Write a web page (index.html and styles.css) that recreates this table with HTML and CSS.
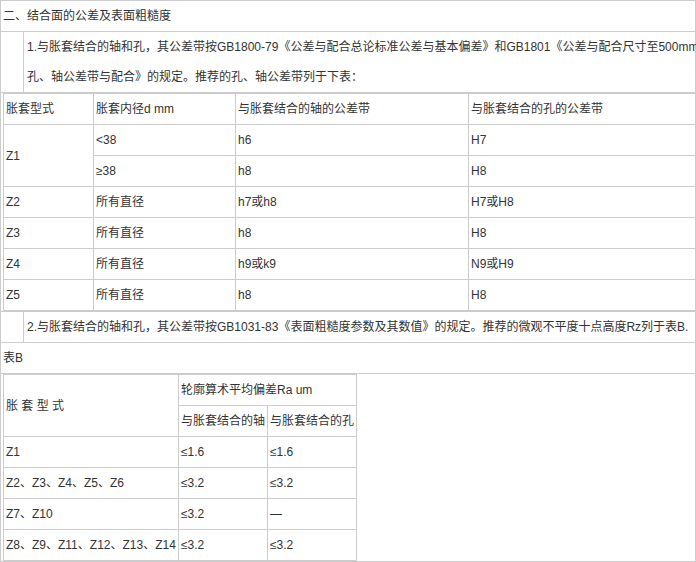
FILE: index.html
```html
<!DOCTYPE html>
<html lang="zh-CN">
<head>
<meta charset="utf-8">
<title>结合面的公差及表面粗糙度</title>
<link rel="stylesheet" href="styles.css">
</head>
<body>
<table class="outer">
  <colgroup><col class="c-indent"><col class="c-main"></colgroup>
  <tbody>
    <tr>
      <td colspan="2" class="title">二、结合面的公差及表面粗糙度</td>
    </tr>
    <tr>
      <td class="indent"></td>
      <td class="para">1.与胀套结合的轴和孔，其公差带按GB1800-79《公差与配合总论标准公差与基本偏差》和GB1801《公差与配合尺寸至500mm<br>孔、轴公差带与配合》的规定。推荐的孔、轴公差带列于下表：</td>
    </tr>
    <tr>
      <td colspan="2" class="holder">
        <table class="grid grid-a">
          <colgroup><col class="a1"><col class="a2"><col class="a3"><col class="a4"></colgroup>
          <tbody>
            <tr><td>胀套型式</td><td>胀套内径d mm</td><td>与胀套结合的轴的公差带</td><td>与胀套结合的孔的公差带</td></tr>
            <tr><td rowspan="2">Z1</td><td>&lt;38</td><td>h6</td><td>H7</td></tr>
            <tr><td>≥38</td><td>h8</td><td>H8</td></tr>
            <tr><td>Z2</td><td>所有直径</td><td>h7或h8</td><td>H7或H8</td></tr>
            <tr><td>Z3</td><td>所有直径</td><td>h8</td><td>H8</td></tr>
            <tr><td>Z4</td><td>所有直径</td><td>h9或k9</td><td>N9或H9</td></tr>
            <tr><td>Z5</td><td>所有直径</td><td>h8</td><td>H8</td></tr>
          </tbody>
        </table>
      </td>
    </tr>
    <tr>
      <td class="indent"></td>
      <td class="para">2.与胀套结合的轴和孔，其公差带按GB1031-83《表面粗糙度参数及其数值》的规定。推荐的微观不平度十点高度Rz列于表B.</td>
    </tr>
    <tr>
      <td colspan="2" class="title">表B</td>
    </tr>
    <tr>
      <td colspan="2" class="holder">
        <table class="grid grid-b">
          <colgroup><col class="b1"><col class="b2"><col class="b3"></colgroup>
          <tbody>
            <tr><td rowspan="2">胀 套 型 式</td><td colspan="2">轮廓算术平均偏差Ra um</td></tr>
            <tr><td>与胀套结合的轴</td><td>与胀套结合的孔</td></tr>
            <tr><td>Z1</td><td>≤1.6</td><td>≤1.6</td></tr>
            <tr><td>Z2、Z3、Z4、Z5、Z6</td><td>≤3.2</td><td>≤3.2</td></tr>
            <tr><td>Z7、Z10</td><td>≤3.2</td><td>—</td></tr>
            <tr><td>Z8、Z9、Z11、Z12、Z13、Z14</td><td>≤3.2</td><td>≤3.2</td></tr>
          </tbody>
        </table>
      </td>
    </tr>
  </tbody>
</table>
</body>
</html>
```

FILE: styles.css
```css
html, body {
  margin: 0;
  padding: 0;
  background: #ffffff;
}

body {
  font-family: "Liberation Sans", "Noto Sans CJK SC", sans-serif;
  font-size: 12px;
  color: #333333;
}

.outer {
  border-collapse: collapse;
  table-layout: fixed;
  width: 695px;
}

.c-indent { width: 23px; }
.c-main { width: 672px; }

.outer > tbody > tr > td {
  border: 1px solid #cccccc;
  padding: 0 2px;
  line-height: 30px;
  vertical-align: middle;
}

.outer > tbody > tr > td.title {
  line-height: 30px;
  padding-left: 2px;
}

.outer > tbody > tr > td.para {
  padding-left: 3px;
  white-space: nowrap;
  overflow: visible;
}

.outer > tbody > tr > td.indent {
  padding: 0;
}

.outer > tbody > tr > td.holder {
  padding: 0 0 0 2px;
  line-height: normal;
}

.grid {
  border-collapse: collapse;
  table-layout: fixed;
}

.grid td {
  border: 1px solid #cccccc;
  padding: 0 2px;
  line-height: 30px;
  white-space: nowrap;
  vertical-align: middle;
}

.grid-a { width: 692px; }
.a1 { width: 90px; }
.a2 { width: 142px; }
.a3 { width: 233px; }
.a4 { width: 227px; }

.grid-b { width: 353px; }
.b1 { width: 175px; }
.b2 { width: 89px; }
.b3 { width: 89px; }
```
